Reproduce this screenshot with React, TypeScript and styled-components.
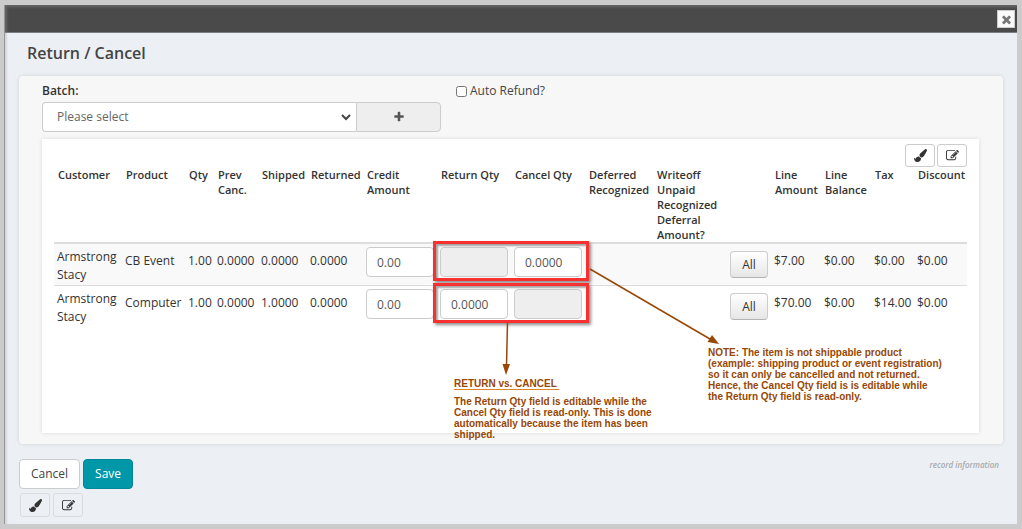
import React from "react";
import styled, { createGlobalStyle, css } from "styled-components";

const GlobalStyle = createGlobalStyle`
  *, *::before, *::after { box-sizing: border-box; }
  body {
    margin: 0;
    background: #cbcbcb;
    color: #333;
    font: 12px/18px "Open Sans", "Liberation Sans", sans-serif;
  }
  button, input, select { font: inherit; color: inherit; }
`;

/* ---------- icons ---------- */

const icons = {
  brush:
    "M1615 0q70 0 122.5 46.5t52.5 116.5q0 63-45 151-332 629-465 752-97 91-218 91-126 0-216.5-92.5t-90.5-219.5q0-128 92-212l638-579q59-54 130-54zm-909 1034q39 76 106.5 130t150.5 76l1 71q4 213-129.5 347t-348.5 134q-123 0-218-46.5t-152.5-127.5-86.5-183-29-220q7 5 41 30t62 44.5 59 36.5 46 17q41 0 55-37 25-66 57.5-112.5t69.5-76 88-47.5 103-25.5 125-10.5z",
  edit:
    "M888 1184l116-116-152-152-116 116v56h96v96h56zm440-720q-16-16-33 1l-350 350q-17 17-1 33t33-1l350-350q17-17 1-33zm80 594v190q0 119-84.5 203.5t-203.5 84.5h-832q-119 0-203.5-84.5t-84.5-203.5v-832q0-119 84.5-203.5t203.5-84.5h832q63 0 117 25 15 7 18 23 3 17-9 29l-49 49q-14 14-32 8-23-6-45-6h-832q-66 0-113 47t-47 113v832q0 66 47 113t113 47h832q66 0 113-47t47-113v-126q0-13 9-22l64-64q15-15 35-7t20 29zm-96-738l288 288-672 672h-288v-288zm444 132l-92 92-288-288 92-92q28-28 68-28t68 28l152 152q28 28 28 68t-28 68z",
  plus:
    "M1600 736v192q0 40-28 68t-68 28h-416v416q0 40-28 68t-68 28h-192q-40 0-68-28t-28-68v-416h-416q-40 0-68-28t-28-68v-192q0-40 28-68t68-28h416v-416q0-40 28-68t68-28h192q40 0 68 28t28 68v416h416q40 0 68 28t28 68z",
  times:
    "M1490 1322q0 40-28 68l-136 136q-28 28-68 28t-68-28l-294-294-294 294q-28 28-68 28t-68-28l-136-136q-28-28-28-68t28-68l294-294-294-294q-28-28-28-68t28-68l136-136q28-28 68-28t68 28l294 294 294-294q28-28 68-28t68 28l136 136q28 28 28 68t-28 68l-294 294 294 294q28 28 28 68z",
};

const Icon = ({ name, size = 12 }: { name: keyof typeof icons; size?: number }) => (
  <svg width={size} height={size} viewBox="0 0 1792 1792" fill="currentColor" aria-hidden="true">
    <path d={icons[name]} />
  </svg>
);

/* ---------- dialog frame ---------- */

const Dialog = styled.main`
  margin: 5px;
  min-height: calc(100vh - 10px);
  background: #ecf0f5;
  box-shadow: -1px 0 0 #969696, inset 3px 0 2px -1px #d2d5da;
`;

const TitleBar = styled.header`
  display: flex;
  justify-content: flex-end;
  height: 28px;
  padding: 5px 2px;
  background: #4a4a4a;
  border-bottom: 1px solid #7d7f82;
  box-shadow: inset 2px 2px 3px #666;
`;

const CloseButton = styled.button`
  display: flex;
  align-items: center;
  justify-content: center;
  width: 18px;
  height: 18px;
  padding: 0;
  border: 1px solid #ccc;
  background: #fafafa;
  color: #777;
`;

const Body = styled.div`
  padding: 10px 14px 7px;
`;

const Heading = styled.h1`
  margin: 0 8px 12px;
  font-size: 16px;
  line-height: 21px;
  font-weight: 600;
  color: #444;
`;

const Card = styled.section`
  padding: 6px 24px 11px 23px;
  border-radius: 4px;
  background: #f7f7f7;
  box-shadow: 0 0 4px rgba(0, 0, 0, 0.12);
`;

/* ---------- form ---------- */

const FormRow = styled.div`
  display: grid;
  grid-template-columns: minmax(0, 399px) 1fr;
  column-gap: 15px;
  margin-bottom: 7px;
`;

const FieldLabel = styled.label`
  display: block;
  margin-bottom: 2px;
  font-weight: 600;
  color: #333;
`;

const SelectGroup = styled.div`
  display: flex;
`;

const SelectWrap = styled.div`
  position: relative;
  flex: 1;

  svg {
    position: absolute;
    right: 5px;
    top: 12px;
    pointer-events: none;
  }
`;

const controlBox = css`
  height: 30px;
  border: 1px solid #ccc;
  border-radius: 4px;
  background: #fff;
`;

const Select = styled.select`
  ${controlBox}
  display: block;
  width: 100%;
  padding: 0 20px 0 14px;
  border-right: 0;
  border-radius: 4px 0 0 4px;
  appearance: none;
  color: #666;
`;

const AddButton = styled.button`
  ${controlBox}
  width: 85px;
  padding: 0;
  border-radius: 0 4px 4px 0;
  background: #eee;
  color: #555;

  svg {
    display: block;
    margin: 0 auto;
  }
`;

const CheckLabel = styled.label`
  display: flex;
  align-items: center;
  gap: 3px;
  height: 18px;
  color: #444;

  input {
    width: 11px;
    height: 11px;
    margin: 0;
  }
`;

/* ---------- table ---------- */

const Panel = styled.div`
  min-height: 294px;
  padding: 5px 12px;
  background: #fff;
  box-shadow: 0 0 4px rgba(0, 0, 0, 0.12);
`;

const Tools = styled.div`
  display: flex;
  justify-content: flex-end;
  gap: 2px;
`;

const PageTools = styled(Tools)`
  justify-content: flex-start;
  gap: 3px;
  padding-left: 1px;
`;

const ToolButton = styled.button<{ $ghost?: boolean }>`
  display: flex;
  align-items: center;
  justify-content: center;
  width: 30px;
  height: ${(p) => (p.$ghost ? 24 : 23)}px;
  padding: 0;
  border: 1px solid ${(p) => (p.$ghost ? "#dadbde" : "#ccc")};
  border-radius: 3px;
  background: ${(p) => (p.$ghost ? "transparent" : "#fff")};
  color: #333;
`;

const TableArea = styled.div`
  position: relative;
`;

const Table = styled.table`
  width: 100%;
  table-layout: fixed;
  border-collapse: separate;
  border-spacing: 0;
`;

const Th = styled.th`
  height: 77px;
  padding: 0 0 0 4px;
  border-bottom: 2px solid #ddd;
  font-size: 11px;
  line-height: 15px;
  font-weight: 600;
  text-align: left;
  vertical-align: top;
`;

const Row = styled.tr<{ $shaded?: boolean }>`
  background: ${(p) => (p.$shaded ? "#f9f9f9" : "#fff")};

  td {
    border-bottom: 1px solid ${(p) => (p.$shaded ? "#ddd" : "#fff")};
  }
`;

const Td = styled.td<{ $top?: number }>`
  height: 42px;
  padding: ${(p) => p.$top ?? 8}px 0 0 3px;
  vertical-align: top;
  white-space: nowrap;
`;

const NameTd = styled(Td)`
  white-space: normal;
`;

const Qty = styled.input`
  ${controlBox}
  display: block;
  width: 68px;
  padding: 0 10px;
  color: #555;

  &:read-only {
    background: #eee;
  }
`;

const AllButton = styled.button`
  width: 38px;
  height: 27px;
  padding: 0;
  border: 1px solid #ccc;
  border-bottom-color: #b3b3b3;
  border-radius: 4px;
  background: linear-gradient(#fff, #e6e6e6);
`;

/* ---------- annotations drawn over the table ---------- */

const Highlight = styled.div<{ $top: number }>`
  position: absolute;
  left: 379px;
  top: ${(p) => p.$top}px;
  width: 156px;
  height: 40px;
  border: 3px solid #f8302f;
  box-shadow: 2px 2px 3px rgba(0, 0, 0, 0.45), inset 2px 2px 2px rgba(0, 0, 0, 0.35);
  pointer-events: none;
`;

const Arrows = styled.svg`
  position: absolute;
  left: 0;
  top: 0;
  pointer-events: none;
`;

const Note = styled.div<{ $left: number; $top: number }>`
  position: absolute;
  left: ${(p) => p.$left}px;
  top: ${(p) => p.$top}px;
  font: bold 10px/11px "Liberation Sans", Arial, sans-serif;
  white-space: nowrap;
  color: #974806;
`;

const NoteTitle = styled.div`
  margin-bottom: 7px;
  text-decoration: underline;
  text-decoration-color: #d9822b;
  text-underline-offset: 2px;
  white-space: pre;
`;

/* ---------- footer ---------- */

const Footer = styled.footer`
  display: flex;
  justify-content: space-between;
  padding: 15px 4px 4px 0;
`;

const Actions = styled.div`
  display: flex;
  gap: 3px;
`;

const ActionButton = styled.button<{ $primary?: boolean }>`
  height: 30px;
  padding: 0 11px;
  border: 1px solid ${(p) => (p.$primary ? "#00889a" : "#ccc")};
  border-radius: 4px;
  background: ${(p) => (p.$primary ? "#0097a9" : "#fff")};
  color: ${(p) => (p.$primary ? "#fff" : "#444")};
`;

const RecordLink = styled.a`
  font-size: 8px;
  line-height: 12px;
  font-style: italic;
  font-weight: 600;
  color: #aaa;
  text-decoration: none;
`;

const columns: { label: string; width?: number }[] = [
  { label: "Customer", width: 68 },
  { label: "Product", width: 63 },
  { label: "Qty", width: 29 },
  { label: "Prev Canc.", width: 44 },
  { label: "Shipped", width: 49 },
  { label: "Returned", width: 56 },
  { label: "Credit Amount", width: 74 },
  { label: "Return Qty", width: 74 },
  { label: "Cancel Qty", width: 74 },
  { label: "Deferred Recognized", width: 68 },
  { label: "Writeoff Unpaid Recognized Deferral Amount?", width: 74 },
  { label: "", width: 44 },
  { label: "Line Amount", width: 50 },
  { label: "Line Balance", width: 50 },
  { label: "Tax", width: 43 },
  { label: "Discount" },
];

const rows = [
  {
    product: "CB Event",
    shipped: "0.0000",
    returnQty: "",
    cancelQty: "0.0000",
    amount: "$7.00",
    tax: "$0.00",
  },
  {
    product: "Computer",
    shipped: "1.0000",
    returnQty: "0.0000",
    cancelQty: "",
    amount: "$70.00",
    tax: "$14.00",
  },
];

export default function App() {
  return (
    <>
      <GlobalStyle />
      <Dialog>
        <TitleBar>
          <CloseButton type="button" aria-label="Close">
            <Icon name="times" size={13} />
          </CloseButton>
        </TitleBar>
        <Body>
          <Heading>Return / Cancel</Heading>
          <Card>
            <FormRow>
              <div>
                <FieldLabel htmlFor="batch">Batch:</FieldLabel>
                <SelectGroup>
                  <SelectWrap>
                    <Select id="batch">
                      <option>Please select</option>
                    </Select>
                    <svg width="10" height="7" viewBox="0 0 10 7" fill="none" stroke="#444" strokeWidth="2">
                      <path d="M1 1l4 4 4-4" />
                    </svg>
                  </SelectWrap>
                  <AddButton type="button" aria-label="Add batch">
                    <Icon name="plus" />
                  </AddButton>
                </SelectGroup>
              </div>
              <CheckLabel>
                <input type="checkbox" />
                Auto Refund?
              </CheckLabel>
            </FormRow>

            <Panel>
              <Tools>
                <ToolButton type="button" aria-label="Format">
                  <Icon name="brush" size={13} />
                </ToolButton>
                <ToolButton type="button" aria-label="Edit">
                  <Icon name="edit" size={13} />
                </ToolButton>
              </Tools>
              <TableArea>
                <Table>
                  <colgroup>
                    {columns.map((c) => (
                      <col key={c.label} width={c.width} />
                    ))}
                  </colgroup>
                  <thead>
                    <tr>
                      {columns.map((c) => (
                        <Th key={c.label} scope="col">
                          {c.label}
                        </Th>
                      ))}
                    </tr>
                  </thead>
                  <tbody>
                    {rows.map((r, i) => (
                      <Row key={r.product} $shaded={i === 0}>
                        <NameTd $top={4}>Armstrong Stacy</NameTd>
                        <Td>{r.product}</Td>
                        <Td>1.00</Td>
                        <Td>0.0000</Td>
                        <Td>{r.shipped}</Td>
                        <Td>0.0000</Td>
                        <Td $top={3}>
                          <Qty aria-label="Credit Amount" defaultValue="0.00" />
                        </Td>
                        <Td $top={3}>
                          <Qty aria-label="Return Qty" defaultValue={r.returnQty} readOnly={!r.returnQty} />
                        </Td>
                        <Td $top={3}>
                          <Qty aria-label="Cancel Qty" defaultValue={r.cancelQty} readOnly={!r.cancelQty} />
                        </Td>
                        <Td />
                        <Td />
                        <Td $top={7}>
                          <AllButton type="button">All</AllButton>
                        </Td>
                        <Td>{r.amount}</Td>
                        <Td>$0.00</Td>
                        <Td>{r.tax}</Td>
                        <Td>$0.00</Td>
                      </Row>
                    ))}
                  </tbody>
                </Table>

                <Highlight $top={74} />
                <Highlight $top={116} />
                <Arrows width="680" height="220" viewBox="0 0 680 220" stroke="#974806" fill="#974806">
                  <path d="M536 102L656 172" strokeWidth="1.5" />
                  <path d="M665 177L653.500 175L658 168Z" stroke="none" />
                  <path d="M453.500 156L452.500 198" strokeWidth="1.5" />
                  <path d="M452 208L448.500 197H456Z" stroke="none" />
                </Arrows>
                <Note $left={400} $top={211}>
                  <NoteTitle>{"RETURN vs. CANCEL "}</NoteTitle>
                  The Return Qty field is editable while the
                  <br />
                  Cancel Qty field is read-only. This is done
                  <br />
                  automatically because the item has been
                  <br />
                  shipped.
                </Note>
                <Note $left={654} $top={180}>
                  NOTE: The item is not shippable product
                  <br />
                  (example: shipping product or event registration)
                  <br />
                  so it can only be cancelled and not returned.
                  <br />
                  Hence, the Cancel Qty field is is editable while
                  <br />
                  the Return Qty field is read-only.
                </Note>
              </TableArea>
            </Panel>
          </Card>

          <Footer>
            <Actions>
              <ActionButton type="button">Cancel</ActionButton>
              <ActionButton type="submit" $primary>
                Save
              </ActionButton>
            </Actions>
            <RecordLink href="#record">record information</RecordLink>
          </Footer>
          <PageTools>
            <ToolButton type="button" aria-label="Format page" $ghost>
              <Icon name="brush" size={13} />
            </ToolButton>
            <ToolButton type="button" aria-label="Edit page" $ghost>
              <Icon name="edit" size={13} />
            </ToolButton>
          </PageTools>
        </Body>
      </Dialog>
    </>
  );
}
